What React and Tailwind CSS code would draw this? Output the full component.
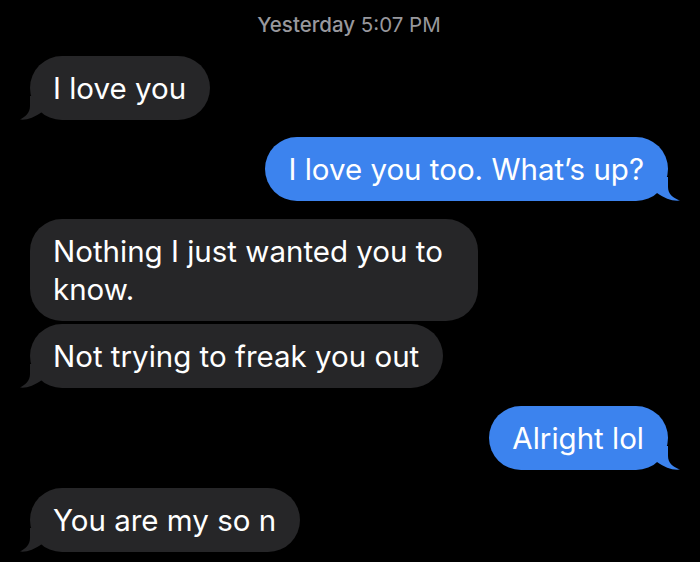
const messages = [
  { from: "them", text: "I love you", gap: "mt-0" },
  { from: "me", text: "I love you too. What’s up?", gap: "mt-[17px]" },
  { from: "them", text: "Nothing I just wanted you to know.", gap: "mt-[18px]", tail: false },
  { from: "them", text: "Not trying to freak you out", gap: "mt-[3px]" },
  { from: "me", text: "Alright lol", gap: "mt-[18px]" },
  { from: "them", text: "You are my so n", gap: "mt-[18px]" },
];

// iMessage bubble tail
function Tail({ side, color }) {
  if (side === "left") {
    return (
      <svg
        className="absolute left-[-10px] bottom-0"
        width="24"
        height="24"
        viewBox="0 0 24 24"
      >
        <path d="M10 0 L10 10 C10 17 5 21 0 23.5 C7 24.3 14 21.5 22 16 L22 0 Z" fill={color} />
      </svg>
    );
  }
  return (
    <svg
      className="absolute right-[-12px] bottom-0"
      width="26"
      height="24"
      viewBox="0 0 26 24"
    >
      <path d="M14 0 L14 10 C14 17 19 21 26 23.5 C18 24.3 11 21.5 3 16 L3 0 Z" fill={color} />
    </svg>
  );
}

function Bubble({ from, text, gap, tail = true }) {
  const mine = from === "me";
  const color = mine ? "#3c83ee" : "#262628";
  return (
    <div className={`flex ${mine ? "justify-end" : "justify-start"} ${gap}`}>
      <div
        className={`relative max-w-[448px] rounded-[32px] pl-[23px] pr-[24px] py-[13px] text-[29.5px] leading-[38px] text-white ${
          mine ? "bg-[#3c83ee]" : "bg-[#262628]"
        }`}
      >
        {text}
        {tail && <Tail side={mine ? "right" : "left"} color={color} />}
      </div>
    </div>
  );
}

export default function App() {
  return (
    <div
      className="w-[700px] h-[562px] overflow-hidden bg-black pl-[30px] pr-[32px] pt-[13px]"
      style={{ fontFamily: "Inter, 'Liberation Sans', sans-serif" }}
    >
      <div className="text-center text-[20.5px] leading-[24px] text-[#98989d] mb-[19px]">
        <span className="font-medium">Yesterday</span> 5:07 PM
      </div>
      {messages.map((m, i) => (
        <Bubble key={i} {...m} />
      ))}
    </div>
  );
}
